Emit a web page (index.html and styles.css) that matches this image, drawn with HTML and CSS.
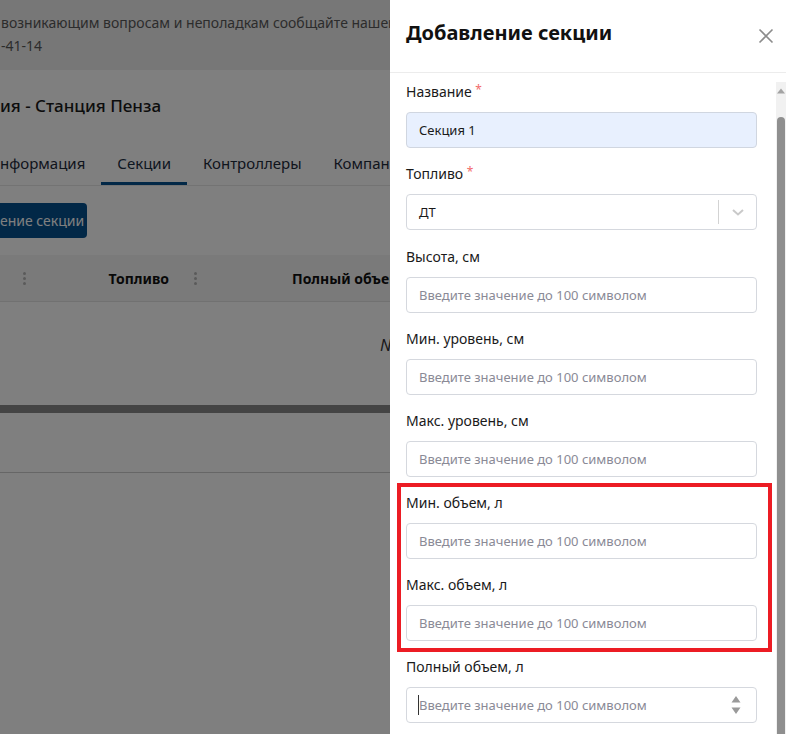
FILE: index.html
```html
<!DOCTYPE html>
<html lang="ru">
<head>
<meta charset="utf-8">
<title>Добавление секции</title>
<link rel="stylesheet" href="styles.css">
</head>
<body>
<div class="page">
  <div class="banner">
    <div class="banner-line">возникающим вопросам и неполадкам сообщайте нашей т</div>
    <div class="banner-line">-41-14</div>
  </div>
  <h1 class="page-title">ия - Станция Пенза</h1>
  <div class="tabs">
    <div class="tab tab-first">нформация</div>
    <div class="tab tab-active">Секции</div>
    <div class="tab">Контроллеры</div>
    <div class="tab">Компани</div>
  </div>
  <div class="actions">
    <button class="btn-primary">ение секции</button>
  </div>
  <div class="table">
    <div class="thead">
      <div class="th th-first"><span class="dots"><i></i><i></i><i></i></span></div>
      <div class="th th-fuel"><span>Топливо</span><span class="dots"><i></i><i></i><i></i></span></div>
      <div class="th th-vol"><span>Полный объем</span></div>
    </div>
    <div class="tbody"><span class="empty">N</span></div>
    <div class="hscroll"></div>
    <div class="tfoot"></div>
  </div>
</div>
<div class="overlay"></div>
<aside class="drawer">
  <header class="drawer-head">
    <h2 class="drawer-title">Добавление секции</h2>
    <svg class="close" width="16" height="16" viewBox="0 0 16 16"><path d="M1.5 1.5L14.5 14.5M14.5 1.5L1.5 14.5" stroke="#8c8c8c" stroke-width="1.6" fill="none"/></svg>
  </header>
  <div class="drawer-body">
    <form class="form">
      <div class="field">
        <label class="label">Название <span class="req">*</span></label>
        <div class="input input-filled">Секция 1</div>
      </div>
      <div class="field field-select">
        <label class="label">Топливо <span class="req">*</span></label>
        <div class="input select">
          <span class="value">ДТ</span>
          <span class="sep"></span>
          <svg class="chev" width="14" height="9" viewBox="0 0 14 9"><path d="M2 2L7 6.5L12 2" stroke="#c9c9c9" stroke-width="2" fill="none"/></svg>
        </div>
      </div>
      <div class="field">
        <label class="label">Высота, см</label>
        <div class="input placeholder">Введите значение до 100 символом</div>
      </div>
      <div class="field">
        <label class="label">Мин. уровень, см</label>
        <div class="input placeholder">Введите значение до 100 символом</div>
      </div>
      <div class="field">
        <label class="label">Макс. уровень, см</label>
        <div class="input placeholder">Введите значение до 100 символом</div>
      </div>
      <div class="field">
        <label class="label">Мин. объем, л</label>
        <div class="input placeholder">Введите значение до 100 символом</div>
      </div>
      <div class="field">
        <label class="label">Макс. объем, л</label>
        <div class="input placeholder">Введите значение до 100 символом</div>
      </div>
      <div class="field">
        <label class="label">Полный объем, л</label>
        <div class="input placeholder number">
          <span class="caret"></span>
          <span class="ph">Введите значение до 100 символом</span>
          <svg class="spin" width="10" height="20" viewBox="0 0 10 20"><path d="M5 1L9.5 7.5H0.5Z M0.5 12.5H9.5L5 19Z" fill="#9a9a9a"/></svg>
        </div>
      </div>
    </form>
    <div class="vscroll">
      <svg class="vs-arrow" width="10" height="6" viewBox="0 0 10 6"><path d="M5 0.5L9 5.5H1Z" fill="#a3a3a3"/></svg>
      <div class="vs-thumb"></div>
    </div>
  </div>
  <div class="highlight"></div>
</aside>
</body>
</html>
```
FILE: styles.css
```css
* { box-sizing: border-box; }
html, body {
  margin: 0;
  padding: 0;
  width: 786px;
  height: 734px;
  overflow: hidden;
  background: #ffffff;
  font-family: "Noto Sans", "Open Sans", sans-serif;
}
body { position: relative; }

.page {
  width: 390px;
  height: 734px;
  overflow: hidden;
  color: #222;
}
.banner {
  height: 70px;
  background: #eeeeee;
  padding-top: 11px;
}
.banner-line {
  font-size: 14px;
  line-height: 23px;
  color: #595959;
  white-space: nowrap;
  padding-left: 1px;
  overflow: hidden;
}
.page-title {
  margin: 24px 0 0 0;
  font-size: 17px;
  line-height: 24px;
  font-weight: 500;
  color: #1a1a1a;
  white-space: nowrap;
}
.tabs {
  display: flex;
  margin-top: 25px;
  border-bottom: 1px solid #e6e6e6;
  overflow: hidden;
}
.tab {
  padding: 10px 16px 9px;
  font-size: 15px;
  line-height: 20px;
  color: #1e2a3a;
  border-bottom: 3px solid transparent;
  white-space: nowrap;
  flex: none;
}
.tab-first { padding-left: 0; }
.tab-active { border-bottom-color: #04508f; color: #1b2e44; }

.actions { margin-top: 17px; }
.btn-primary {
  display: block;
  height: 35px;
  width: 87px;
  border: none;
  border-radius: 0 4px 4px 0;
  background: #04508f;
  color: #ffffff;
  font-family: inherit;
  font-size: 14px;
  text-align: right;
  padding: 0 12px 0 0;
  white-space: nowrap;
  overflow: hidden;
}

.table { margin-top: 17px; }
.thead {
  display: flex;
  height: 47px;
  background: #f5f5f5;
  border-bottom: 1px solid #e2e2e2;
  align-items: center;
  font-size: 14px;
  font-weight: 700;
  color: #111;
  overflow: hidden;
}
.th { display: flex; align-items: center; flex: none; }
.th-first { width: 30px; justify-content: flex-end; padding-right: 4px; }
.th-fuel { width: 170px; justify-content: flex-end; gap: 25px; padding-right: 3px; }
.th-vol { padding-left: 92px; white-space: nowrap; }
.dots { display: inline-flex; flex-direction: column; gap: 2px; }
.dots i { display: block; width: 3px; height: 3px; border-radius: 50%; background: #b5b5b5; }

.tbody {
  height: 103px;
  padding: 32px 0 0 380px;
  white-space: nowrap;
  overflow: hidden;
}
.empty {
  font-size: 16px;
  font-style: italic;
  color: #333;
}
.hscroll { height: 8px; background: #888888; }
.tfoot { height: 60px; border-bottom: 1px solid #cccccc; }

.overlay {
  position: absolute;
  inset: 0;
  background: rgba(0, 0, 0, 0.5);
}

.drawer {
  position: absolute;
  top: 0;
  right: 0;
  width: 396px;
  height: 734px;
  background: #ffffff;
  display: flex;
  flex-direction: column;
}
.drawer-head {
  height: 73px;
  flex: none;
  border-bottom: 1px solid #ececec;
  display: flex;
  align-items: center;
  justify-content: space-between;
  padding: 0 12px 6px 16px;
}
.drawer-title {
  margin: 0;
  font-size: 20px;
  line-height: 26px;
  font-weight: 700;
  color: #111;
}
.close { display: block; margin-top: 5px; }

.drawer-body {
  flex: 1;
  display: flex;
  overflow: hidden;
}
.form {
  width: 351px;
  margin: 0 0 0 16px;
  padding-top: 9px;
}
.field { margin-bottom: 16px; }
.field-select { margin-bottom: 17px; }
.label {
  display: block;
  font-size: 14px;
  line-height: 20px;
  color: #1a1a1a;
  margin-bottom: 10px;
}
.req { color: #f26b6b; font-size: 12px; vertical-align: top; line-height: 16px; }
.input {
  height: 36px;
  border: 1px solid #d5d8de;
  border-radius: 4px;
  display: flex;
  align-items: center;
  padding: 0 12px;
  font-size: 13px;
  color: #1a1a1a;
  white-space: nowrap;
}
.input-filled { background: #e8f0fe; border-color: #d0d6e0; }
.placeholder { color: #8a8a96; }
.select { padding-right: 11px; }
.select .value { flex: 1; }
.sep { width: 1px; height: 24px; background: #d3d3d3; margin-right: 12px; }
.number .ph { flex: 1; }
.caret { width: 1px; height: 20px; background: #333; margin-left: -1px; }
.spin { display: block; margin-right: 3px; }

.vscroll {
  margin: 9px 0 0 19px;
  width: 10px;
  flex: none;
  background: #f1f1f1;
  display: flex;
  flex-direction: column;
  align-items: center;
}
.vs-arrow { margin-top: 6px; display: block; }
.vs-thumb {
  margin-top: 23px;
  width: 8px;
  flex: 1;
  background: #8f8f8f;
  border-radius: 4px 4px 0 0;
}

.highlight {
  position: absolute;
  left: 7px;
  top: 483px;
  width: 375px;
  height: 169px;
  border: 4px solid #ec1c24;
}
```
